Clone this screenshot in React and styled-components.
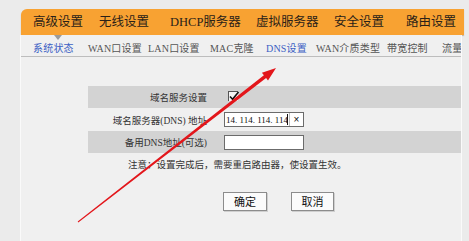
import React from "react";
import styled, { createGlobalStyle } from "styled-components";

const Global = createGlobalStyle`
  html, body { margin: 0; padding: 0; background: #ebebeb; }
  body { font-family: "Noto Sans CJK SC", "Liberation Sans", sans-serif; }
`;

const Page = styled.div`
  position: relative;
  width: 469px;
  height: 241px;
  overflow: hidden;
  background: #ebebeb;
  font-family: "Liberation Serif", "Noto Sans CJK SC", serif;
`;

const MenuBar = styled.div`
  display: flex;
  align-items: center;
  height: 26px;
  margin: 9px 5px 0 21px;
  padding-left: 12px;
  background: #f8a232;
  border-radius: 6px 0 0 0;
  box-shadow: 0 1px 1px rgba(120, 90, 40, 0.35);
`;

const MenuItem = styled.div`
  position: relative;
  flex: 0 0 ${(p) => p.$w}px;
  font-size: 12.5px;
  line-height: 26px;
  color: #2a2118;
  white-space: nowrap;
  ${(p) =>
    p.$active &&
    `
    &::after {
      content: "";
      position: absolute;
      left: 21px;
      bottom: -5px;
      border-left: 4px solid transparent;
      border-right: 4px solid transparent;
      border-top: 5px solid #9b9b9b;
    }
  `}
`;

const Panel = styled.div`
  width: 440px;
  height: 206px;
  margin-left: 20px;
  border-left: 1px solid #fafafa;
  border-right: 1px solid #fafafa;
  background: #f0f0f0;
  overflow: hidden;
`;

const SubNav = styled.div`
  display: flex;
  align-items: center;
  height: 22px;
  padding: 3px 0 0 12px;
  box-sizing: border-box;
  border-bottom: 1px solid #bdbdbd;
  white-space: nowrap;
`;

const SubItem = styled.div`
  flex: 0 0 ${(p) => p.$w || 60}px;
  font-size: 10px;
  letter-spacing: 0.2px;
  color: ${(p) => (p.$active ? "#3b5fc4" : "#555")};
`;

const Form = styled.div`
  margin: 29px 0 0 67px;
  width: 374px;
`;

const Row = styled.div`
  display: flex;
  align-items: center;
  height: ${(p) => p.$h}px;
  background: ${(p) => (p.$shade ? "#d3d3d3" : "transparent")};
`;

const Label = styled.div`
  flex: 0 0 124px;
  box-sizing: border-box;
  padding-right: 5px;
  text-align: right;
  font-size: 9.5px;
  color: #333;
  white-space: nowrap;
`;

const Value = styled.div`
  display: flex;
  align-items: center;
  padding-left: 12px;
`;

const Check = styled.div`
  width: 9px;
  height: 9px;
  margin: 0 0 2px 4px;
  border-top: 1px solid #555;
  border-left: 1px solid #555;
  background: #f4f4f4;
  position: relative;
  svg { position: absolute; left: -1px; top: -2px; }
`;

const Field = styled.div`
  display: flex;
  align-items: center;
  width: 80px;
  height: 15px;
  box-sizing: border-box;
  border: 1px solid #6b6b6b;
  background: #fff;
  overflow: hidden;
`;

const FieldText = styled.span`
  flex: 1;
  padding-left: 1px;
  font-family: "Liberation Serif", serif;
  font-size: 9px;
  color: #111;
  white-space: nowrap;
  overflow: hidden;
`;

const Caret = styled.span`
  width: 1px;
  height: 11px;
  background: #111;
  margin-right: 1px;
`;

const Clear = styled.span`
  flex: 0 0 13px;
  height: 13px;
  border-left: 1px solid #bbb;
  text-align: center;
  font-family: "Liberation Sans", sans-serif;
  font-size: 10px;
  line-height: 13px;
  color: #111;
`;

const Note = styled.div`
  height: 24px;
  line-height: 24px;
  padding-left: 40px;
  font-size: 9.5px;
  color: #333;
  white-space: nowrap;
`;

const Buttons = styled.div`
  display: flex;
  gap: 24px;
  margin: 15px 0 0 135px;
`;

const Button = styled.button`
  width: ${(p) => p.$w}px;
  height: 19px;
  padding: 0;
  border: 1px solid #8c8c8c;
  background: #fbfbfb;
  box-shadow: 1px 1px 0 #cfcfcf;
  font-family: "Noto Sans CJK SC", sans-serif;
  font-size: 11px;
  line-height: 17px;
  color: #111;
`;

const Overlay = styled.svg`
  position: absolute;
  left: 0;
  top: 0;
  pointer-events: none;
`;

const menu = [
  { t: "高级设置", w: 66, active: true },
  { t: "无线设置", w: 71 },
  { t: "DHCP服务器", w: 86 },
  { t: "虚拟服务器", w: 78 },
  { t: "安全设置", w: 72 },
  { t: "路由设置", w: 60 },
];

const sub = [
  { t: "系统状态", w: 55, active: true },
  { t: "WAN口设置", w: 60 },
  { t: "LAN口设置", w: 62 },
  { t: "MAC克隆", w: 56 },
  { t: "DNS设置", w: 50, active: true },
  { t: "WAN介质类型", w: 71 },
  { t: "带宽控制", w: 55 },
  { t: "流量", w: 30 },
];

export default function App() {
  return (
    <Page>
      <Global />
      <MenuBar>
        {menu.map((m) => (
          <MenuItem key={m.t} $w={m.w} $active={m.active}>
            {m.t}
          </MenuItem>
        ))}
      </MenuBar>
      <Panel>
        <SubNav>
          {sub.map((s) => (
            <SubItem key={s.t} $w={s.w} $active={s.active}>
              {s.t}
            </SubItem>
          ))}
        </SubNav>
        <Form>
          <Row $h={22} $shade>
            <Label>域名服务设置</Label>
            <Value>
              <Check>
                <svg width="12" height="12" viewBox="0 0 12 12">
                  <path d="M2 6.5 L4.6 9.2 L10.5 2" fill="none" stroke="#111" strokeWidth="1.6" />
                </svg>
              </Check>
            </Value>
          </Row>
          <Row $h={23}>
            <Label>域名服务器(DNS) 地址</Label>
            <Value>
              <Field>
                <FieldText>14. 114. 114. 114</FieldText>
                <Caret />
                <Clear>×</Clear>
              </Field>
            </Value>
          </Row>
          <Row $h={22} $shade>
            <Label>备用DNS地址(可选)</Label>
            <Value>
              <Field />
            </Value>
          </Row>
          <Note>注意：设置完成后，需要重启路由器，使设置生效。</Note>
          <Buttons>
            <Button $w={44}>确定</Button>
            <Button $w={43}>取消</Button>
          </Buttons>
        </Form>
      </Panel>
      <Overlay width="469" height="241" viewBox="0 0 469 241">
        <polygon
          points="77.7,221.6 263.9,75.2 261.9,72.7 276,68 268,80.5 266.1,78 78.3,222.4"
          fill="#e3161b"
        />
      </Overlay>
    </Page>
  );
}
